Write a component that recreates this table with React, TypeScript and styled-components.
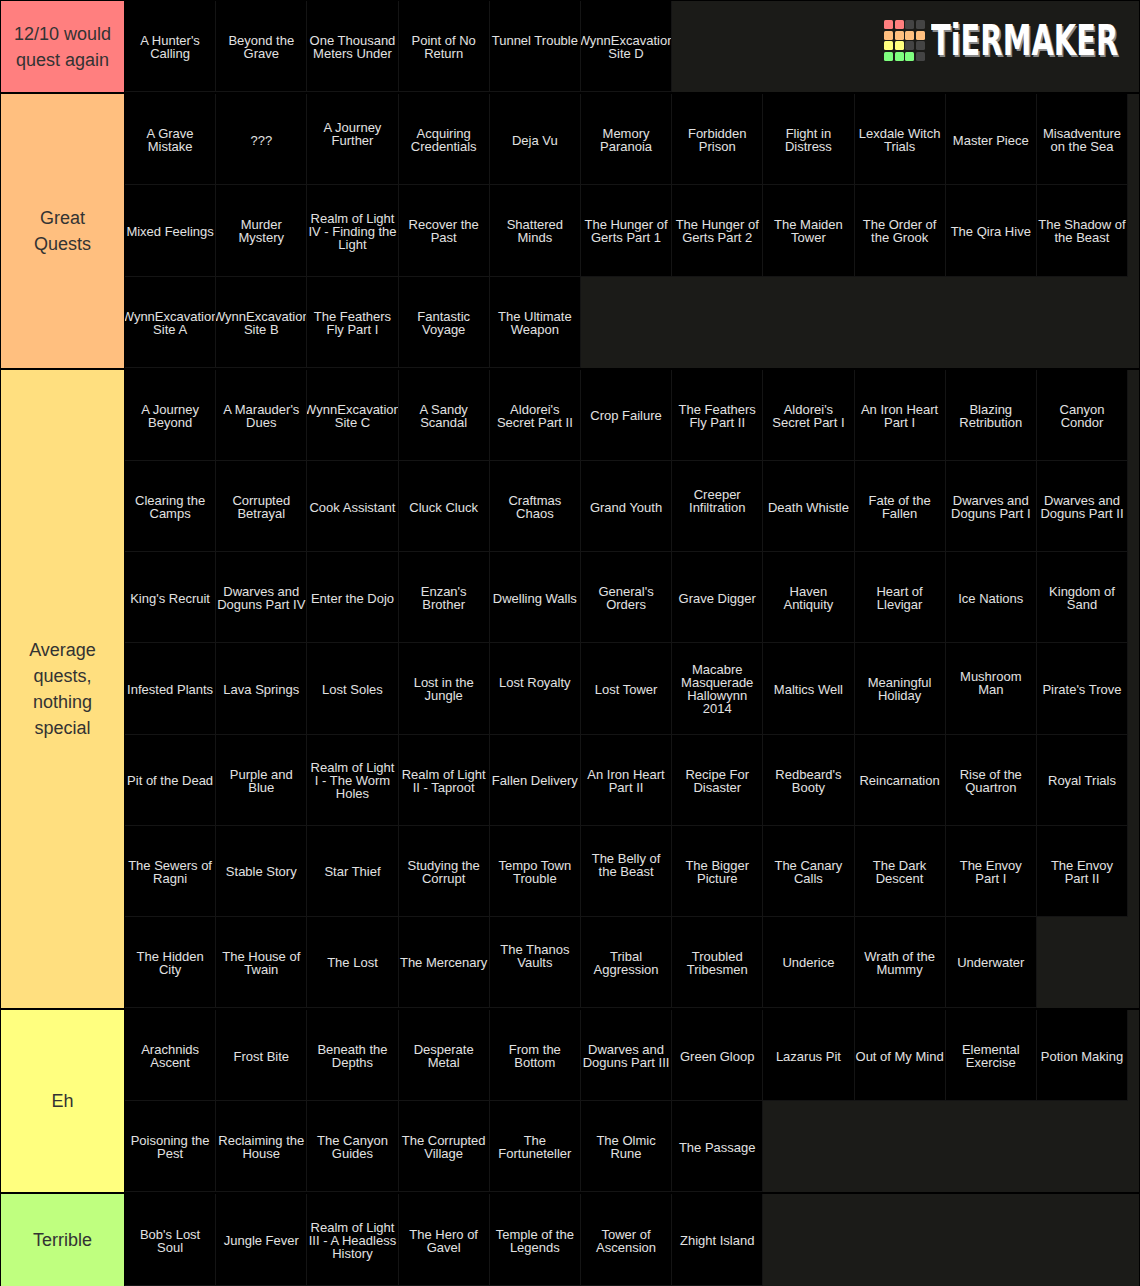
import React from 'react';
import styled, { createGlobalStyle } from 'styled-components';

const Global = createGlobalStyle`
  html, body { margin: 0; padding: 0; background: #1a1a17; }
  body { font-family: "Liberation Sans", Arial, sans-serif; }
`;

const Board = styled.div`
  position: relative;
  width: 1140px;
  box-sizing: border-box;
  border: 1px solid #000;
  border-bottom: none;
  background: #1b1b18;
`;

const TierRow = styled.div<{ $last?: boolean }>`
  display: flex;
  border-bottom: ${(p) => (p.$last ? 'none' : '2px solid #000')};
`;

const Label = styled.div<{ $color: string }>`
  flex: 0 0 124px;
  box-sizing: border-box;
  background: ${(p) => p.$color};
  border-right: 1px solid #000;
  display: flex;
  align-items: center;
  justify-content: center;
  text-align: center;
  padding: 0 10px;
  color: #333;
  font-size: 18px;
  line-height: 26px;
`;

const Items = styled.div`
  flex: 1;
  display: flex;
  flex-wrap: wrap;
  align-content: flex-start;
`;

const Item = styled.div`
  width: 91.2px;
  height: 91.2px;
  box-sizing: border-box;
  background: #000;
  border-right: 1px solid #141414;
  border-bottom: 1px solid #141414;
  display: flex;
  align-items: center;
  justify-content: center;
  overflow: hidden;
`;

const ItemText = styled.span<{ $lift?: boolean }>`
  text-align: center;
  white-space: pre-line;
  color: #e2e2e2;
  font-size: 13px;
  line-height: 13px;
  padding-top: 2px;
  padding-bottom: ${(p) => (p.$lift ? '13px' : '0')};
`;

const Logo = styled.div`
  position: absolute;
  top: 19px;
  right: 20px;
  display: flex;
  align-items: center;
  gap: 6px;
`;

const LogoGrid = styled.div`
  display: grid;
  grid-template-columns: repeat(4, 9px);
  grid-auto-rows: 9px;
  gap: 1.7px;
`;

const Cell = styled.div<{ $c: string }>`
  background: ${(p) => p.$c};
  border-radius: 1.5px;
`;

const LogoTextBox = styled.div`
  width: 188px;
  height: 41px;
  overflow: visible;
`;

const LogoText = styled.div`
  display: inline-block;
  white-space: nowrap;
  transform: scaleX(0.765);
  transform-origin: left center;
  font-family: "DejaVu Sans Condensed", "DejaVu Sans", sans-serif;
  font-weight: bold;
  font-size: 42px;
  line-height: 41px;
  color: #fff;
  text-shadow: 2px 2px 0 #8a8a8a;
`;

type Tier = { label: string; color: string; items: string[] };

const LIFT = new Set([
  'Tunnel Trouble',
  'A Journey Further',
  'Creeper Infiltration',
  'Lost Royalty',
  'Mushroom Man',
  'The Belly of the Beast',
  'The Thanos Vaults',
]);

const tiers: Tier[] = [
  {
    label: '12/10 would quest again',
    color: '#ff7f7f',
    items: [
      "A Hunter's Calling",
      'Beyond the Grave',
      'One Thousand Meters Under',
      'Point of No Return',
      'Tunnel Trouble',
      'WynnExcavation Site D',
    ],
  },
  {
    label: 'Great Quests',
    color: '#ffbf7f',
    items: [
      'A Grave Mistake', '???', 'A Journey Further', 'Acquiring Credentials', 'Deja Vu',
      'Memory Paranoia', 'Forbidden Prison', 'Flight in Distress', 'Lexdale Witch Trials',
      'Master Piece', 'Misadventure on the Sea',
      'Mixed Feelings', 'Murder Mystery', 'Realm of Light IV - Finding the Light',
      'Recover the Past', 'Shattered Minds', 'The Hunger of Gerts Part 1',
      'The Hunger of Gerts Part 2', 'The Maiden Tower', 'The Order of the Grook',
      'The Qira Hive', 'The Shadow of the Beast',
      'WynnExcavation Site A', 'WynnExcavation Site B', 'The Feathers Fly Part I',
      'Fantastic Voyage', 'The Ultimate Weapon',
    ],
  },
  {
    label: 'Average quests, nothing special',
    color: '#ffdf7f',
    items: [
      'A Journey Beyond', "A Marauder's Dues", 'WynnExcavation Site C', 'A Sandy Scandal',
      "Aldorei's Secret Part II", 'Crop Failure', 'The Feathers Fly Part II',
      "Aldorei's Secret Part I", 'An Iron Heart Part I', 'Blazing Retribution', 'Canyon Condor',
      'Clearing the Camps', 'Corrupted Betrayal', 'Cook Assistant', 'Cluck Cluck',
      'Craftmas Chaos', 'Grand Youth', 'Creeper Infiltration', 'Death Whistle',
      'Fate of the Fallen', 'Dwarves and Doguns Part I', 'Dwarves and Doguns Part II',
      "King's Recruit", 'Dwarves and Doguns Part IV', 'Enter the Dojo', "Enzan's Brother",
      'Dwelling Walls', "General's Orders", 'Grave Digger', 'Haven Antiquity',
      'Heart of Llevigar', 'Ice Nations', 'Kingdom of Sand',
      'Infested Plants', 'Lava Springs', 'Lost Soles', 'Lost in the Jungle', 'Lost Royalty',
      'Lost Tower', 'Macabre Masquerade Hallowynn 2014', 'Maltics Well', 'Meaningful Holiday',
      'Mushroom Man', "Pirate's Trove",
      'Pit of the Dead', 'Purple and Blue', 'Realm of Light I - The Worm Holes',
      'Realm of Light II - Taproot', 'Fallen Delivery', 'An Iron Heart Part II',
      'Recipe For Disaster', "Redbeard's Booty", 'Reincarnation', 'Rise of the Quartron',
      'Royal Trials',
      'The Sewers of Ragni', 'Stable Story', 'Star Thief', 'Studying the Corrupt',
      'Tempo Town Trouble', 'The Belly of the Beast', 'The Bigger Picture', 'The Canary Calls',
      'The Dark Descent', 'The Envoy\nPart I', 'The Envoy\nPart II',
      'The Hidden City', 'The House of Twain', 'The Lost', 'The Mercenary', 'The Thanos Vaults',
      'Tribal Aggression', 'Troubled Tribesmen', 'Underice', 'Wrath of the Mummy', 'Underwater',
    ],
  },
  {
    label: 'Eh',
    color: '#ffff7f',
    items: [
      'Arachnids Ascent', 'Frost Bite', 'Beneath the Depths', 'Desperate Metal',
      'From the Bottom', 'Dwarves and Doguns Part III', 'Green Gloop', 'Lazarus Pit',
      'Out of My Mind', 'Elemental Exercise', 'Potion Making',
      'Poisoning the Pest', 'Reclaiming the House', 'The Canyon Guides',
      'The Corrupted Village', 'The Fortuneteller', 'The Olmic Rune', 'The Passage',
    ],
  },
  {
    label: 'Terrible',
    color: '#bfff7f',
    items: [
      "Bob's Lost\nSoul", 'Jungle Fever', 'Realm of Light III - A Headless History',
      'The Hero of Gavel', 'Temple of the Legends', 'Tower of Ascension', 'Zhight Island',
    ],
  },
];

const R = '#ff7f7f';
const O = '#ffbf7f';
const Y = '#ffff7f';
const G = '#7fff7f';
const D = '#444444';
const logoCells = [R, R, D, D, O, O, O, O, Y, Y, D, D, G, G, G, D];

export default function App() {
  return (
    <>
      <Global />
      <Board>
        {tiers.map((t, i) => (
          <TierRow key={t.label} $last={i === tiers.length - 1}>
            <Label $color={t.color}>{t.label}</Label>
            <Items>
              {t.items.map((it) => (
                <Item key={it}>
                  <ItemText $lift={LIFT.has(it)}>{it}</ItemText>
                </Item>
              ))}
            </Items>
          </TierRow>
        ))}
        <Logo>
          <LogoGrid>
            {logoCells.map((c, i) => (
              <Cell key={i} $c={c} />
            ))}
          </LogoGrid>
          <LogoTextBox>
            <LogoText>TiERMAKER</LogoText>
          </LogoTextBox>
        </Logo>
      </Board>
    </>
  );
}
